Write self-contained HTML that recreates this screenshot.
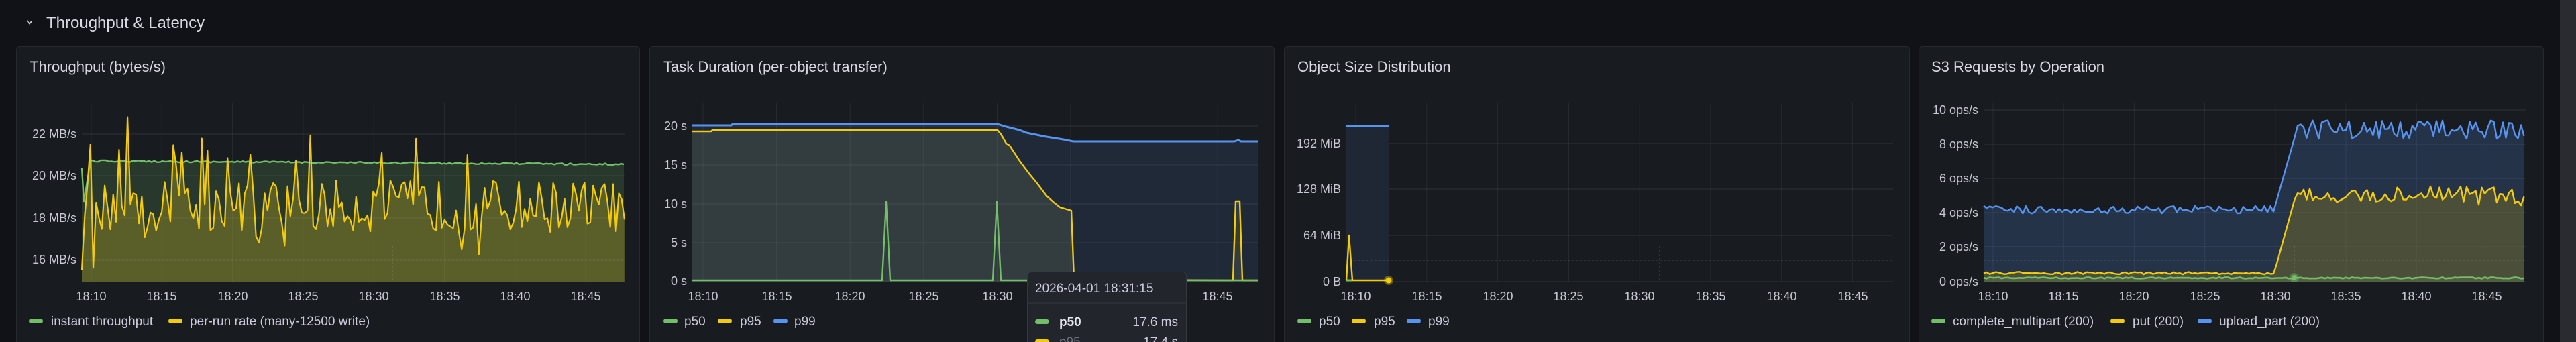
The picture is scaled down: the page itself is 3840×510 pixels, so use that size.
<!DOCTYPE html>
<html><head><meta charset="utf-8">
<style>
html,body{margin:0;padding:0;background:#111217;width:3840px;height:510px;overflow:hidden}
svg{display:block}
text{font-family:"Liberation Sans",sans-serif;fill:#ccccdc}
.ax{font-size:18px;fill:#c7c8d4}
.lg{font-size:19px;fill:#ccccdc}
.tt{font-size:22px;font-weight:500;fill:#d8d9e3}
</style></head><body>
<svg id="s" width="3840" height="510" viewBox="0 0 3840 510" xmlns="http://www.w3.org/2000/svg">
<rect width="3840" height="510" fill="#111217"/>
<rect x="3816" y="0" width="24" height="510" fill="#2a2b30"/>
<path d="M40 31 L44 35.5 L48 31" stroke="#ccccdc" stroke-width="1.8" fill="none"/>
<text x="69" y="42" style="font-size:24px;font-weight:500;fill:#d8d9e3">Throughput &amp; Latency</text>

<rect x="24.5" y="69.5" width="929" height="445" rx="5" fill="#181b1f" stroke="#26292f"/>
<rect x="968.5" y="69.5" width="931" height="445" rx="5" fill="#181b1f" stroke="#26292f"/>
<rect x="1914.5" y="69.5" width="932" height="445" rx="5" fill="#181b1f" stroke="#26292f"/>
<rect x="2860.5" y="69.5" width="931" height="445" rx="5" fill="#181b1f" stroke="#26292f"/>

<text class="tt" x="44" y="107">Throughput (bytes/s)</text>
<text class="tt" x="989" y="107">Task Duration (per-object transfer)</text>
<text class="tt" x="1934" y="107">Object Size Distribution</text>
<text class="tt" x="2879" y="107">S3 Requests by Operation</text>

<g id="grid"></g>
<g id="data"></g>

<g class="ax" text-anchor="end">
<text class="ax" x="114" y="206">22 MB/s</text><text class="ax" x="114" y="268">20 MB/s</text><text class="ax" x="114" y="331">18 MB/s</text><text class="ax" x="114" y="393">16 MB/s</text>
<text class="ax" x="1024" y="194">20 s</text><text class="ax" x="1024" y="252">15 s</text><text class="ax" x="1024" y="310">10 s</text><text class="ax" x="1024" y="368">5 s</text><text class="ax" x="1024" y="425">0 s</text>
<text class="ax" x="1999" y="220">192 MiB</text><text class="ax" x="1999" y="288">128 MiB</text><text class="ax" x="1999" y="357">64 MiB</text><text class="ax" x="1999" y="426">0 B</text>
<text class="ax" x="2949" y="170">10 ops/s</text><text class="ax" x="2949" y="221">8 ops/s</text><text class="ax" x="2949" y="272">6 ops/s</text><text class="ax" x="2949" y="323">4 ops/s</text><text class="ax" x="2949" y="374">2 ops/s</text><text class="ax" x="2949" y="426">0 ops/s</text>
</g>
<g text-anchor="middle">
<text class="ax" x="136" y="448">18:10</text><text class="ax" x="241" y="448">18:15</text><text class="ax" x="347" y="448">18:20</text><text class="ax" x="452" y="448">18:25</text><text class="ax" x="557" y="448">18:30</text><text class="ax" x="663" y="448">18:35</text><text class="ax" x="768" y="448">18:40</text><text class="ax" x="873" y="448">18:45</text>
<text class="ax" x="1048" y="448">18:10</text><text class="ax" x="1158" y="448">18:15</text><text class="ax" x="1267" y="448">18:20</text><text class="ax" x="1377" y="448">18:25</text><text class="ax" x="1487" y="448">18:30</text><text class="ax" x="1596" y="448">18:35</text><text class="ax" x="1706" y="448">18:40</text><text class="ax" x="1815" y="448">18:45</text>
<text class="ax" x="2021" y="448">18:10</text><text class="ax" x="2127" y="448">18:15</text><text class="ax" x="2233" y="448">18:20</text><text class="ax" x="2338" y="448">18:25</text><text class="ax" x="2444" y="448">18:30</text><text class="ax" x="2550" y="448">18:35</text><text class="ax" x="2656" y="448">18:40</text><text class="ax" x="2762" y="448">18:45</text>
<text class="ax" x="2971" y="448">18:10</text><text class="ax" x="3076" y="448">18:15</text><text class="ax" x="3181" y="448">18:20</text><text class="ax" x="3287" y="448">18:25</text><text class="ax" x="3392" y="448">18:30</text><text class="ax" x="3497" y="448">18:35</text><text class="ax" x="3602" y="448">18:40</text><text class="ax" x="3707" y="448">18:45</text>
</g>

<g>
<rect x="43" y="475" width="21" height="7" rx="3.5" fill="#73bf69"/><text class="lg" x="76" y="485">instant throughput</text>
<rect x="251" y="475" width="21" height="7" rx="3.5" fill="#f2cc0c"/><text class="lg" x="283" y="485">per-run rate (many-12500 write)</text>
<rect x="989" y="475" width="21" height="7" rx="3.5" fill="#73bf69"/><text class="lg" x="1020" y="485">p50</text>
<rect x="1070" y="475" width="21" height="7" rx="3.5" fill="#f2cc0c"/><text class="lg" x="1103" y="485">p95</text>
<rect x="1153" y="475" width="21" height="7" rx="3.5" fill="#5794f2"/><text class="lg" x="1184" y="485">p99</text>
<rect x="1934" y="475" width="21" height="7" rx="3.5" fill="#73bf69"/><text class="lg" x="1966" y="485">p50</text>
<rect x="2015" y="475" width="21" height="7" rx="3.5" fill="#f2cc0c"/><text class="lg" x="2048" y="485">p95</text>
<rect x="2097" y="475" width="21" height="7" rx="3.5" fill="#5794f2"/><text class="lg" x="2129" y="485">p99</text>
<rect x="2879" y="475" width="21" height="7" rx="3.5" fill="#73bf69"/><text class="lg" x="2911" y="485">complete_multipart (200)</text>
<rect x="3146" y="475" width="21" height="7" rx="3.5" fill="#f2cc0c"/><text class="lg" x="3179" y="485">put (200)</text>
<rect x="3276" y="475" width="21" height="7" rx="3.5" fill="#5794f2"/><text class="lg" x="3308" y="485">upload_part (200)</text>
</g>

<g>
<rect x="1531.5" y="405.5" width="237" height="110" rx="6" fill="#22252b" stroke="#34373e"/>
<line x1="1531" y1="452" x2="1768" y2="452" stroke="#34373e"/>
<text x="1543" y="436" style="font-size:19px;fill:#ccccdc">2026-04-01 18:31:15</text>
<rect x="1543" y="476" width="21" height="7" rx="3.5" fill="#73bf69"/>
<text x="1579" y="486" style="font-size:19px;font-weight:bold;fill:#e6e7ef">p50</text>
<text x="1756" y="486" text-anchor="end" style="font-size:19px;fill:#ccccdc">17.6 ms</text>
<rect x="1543" y="506" width="21" height="7" rx="3.5" fill="#f2cc0c"/>
<text x="1579" y="516" style="font-size:19px;fill:#6e7079">p95</text>
<text x="1756" y="516" text-anchor="end" style="font-size:19px;fill:#ccccdc">17.4 s</text>
</g>
</svg>
<script>
(function(){
var NS="http://www.w3.org/2000/svg";
var grid=document.getElementById("grid"),data=document.getElementById("data");
function el(p,tag,a){var e=document.createElementNS(NS,tag);for(var k in a)e.setAttribute(k,a[k]);p.appendChild(e);return e;}
var seed=12345;function r(){seed=(seed*16807)%2147483647;return (seed-1)/2147483646;}
function gridP(x0,x1,xt,yt,bot){
 xt.forEach(function(x){el(grid,"line",{x1:x,x2:x,y1:154,y2:bot,stroke:"rgba(204,204,220,0.09)","stroke-width":1});});
 yt.forEach(function(y){el(grid,"line",{x1:x0,x2:x1,y1:y,y2:y,stroke:"rgba(204,204,220,0.12)","stroke-width":1});});
}
function ticks(a,d){var o=[];for(var i=0;i<8;i++)o.push(a+d*i);return o;}
gridP(122,931,ticks(136,105.3),[200,262,325,387],421);
gridP(1032,1875,ticks(1048,109.6),[188,246,304,362,419],421);
gridP(2007,2822,ticks(2021,105.8),[214,282,351,420],421);
gridP(2957,3766,ticks(2971,105.2),[164,215,266,317,368,420],421);
function L(pts){return "M"+pts.map(function(p){return p[0].toFixed(1)+" "+p[1].toFixed(1);}).join(" L");}
function F(pts,b){return L(pts)+" L"+pts[pts.length-1][0]+" "+b+" L"+pts[0][0]+" "+b+" Z";}
function draw(pts,col,fill,b,w){if(fill)el(data,"path",{d:F(pts,b),fill:fill});el(data,"path",{d:L(pts),stroke:col,"stroke-width":w||2.2,fill:"none","stroke-linejoin":"round"});}
// Panel 1
var g1=[[122,250],[125,300],[135,240]];for(var x=138;x<=931;x+=4){g1.push([x,240+(x-138)/793*5+(r()-0.5)*2.5]);}
var y1=[];var n=190;for(var i=0;i<=n;i++){var x=122+809*i/n,v;var q=r();
 if(q<0.09)v=20.5+r()*1.5;else if(q<0.15)v=16+r()*1.2;else v=17.3+r()*2.5;
 if(i==0)v=15.5;if(i==3)v=21.5;if(i==4)v=15.6;if(i==16)v=22.8;y1.push([x,262-(v-20)*31.2]);}
draw(g1,"#73bf69","rgba(115,191,105,0.18)",421,2.4);
draw(y1,"#f2cc0c","rgba(160,150,40,0.42)",421,2.2);
el(data,"line",{x1:585,x2:585,y1:367,y2:421,stroke:"rgba(204,204,220,0.25)","stroke-dasharray":"3 3"});
el(data,"line",{x1:122,x2:931,y1:388,y2:388,stroke:"rgba(204,204,220,0.25)","stroke-dasharray":"3 3"});
// Panel 2
var b2=[[1032,187],[1090,187],[1092,185],[1487,185],[1500,189],[1520,194],[1530,198],[1560,204],[1585,208],[1600,211],[1840,211],[1846,209],[1850,211],[1875,211]];
var yy2=[[1032,196],[1060,196],[1062,194],[1487,194],[1492,200],[1500,214],[1505,217],[1520,240],[1535,260],[1545,272],[1560,292],[1570,301],[1580,309],[1597,314],[1601,417],[1838,418],[1842,300],[1848,300],[1852,418],[1875,418]];
var gg2=[[1032,418],[1315,418],[1321,301],[1327,418],[1480,418],[1486,301],[1492,418],[1875,418]];
draw(b2,"#5794f2","rgba(87,148,242,0.12)",421,3);
draw(yy2,"#f2cc0c","rgba(120,130,90,0.22)",421,2.4);
draw(gg2,"#73bf69",null,421,2.4);
// Panel 3
el(data,"rect",{x:2007,y:188,width:63,height:233,fill:"#1f2734"});
el(data,"line",{x1:2007,x2:2070,y1:188,y2:188,stroke:"#5794f2","stroke-width":3});
el(data,"line",{x1:2474,x2:2474,y1:367,y2:421,stroke:"rgba(204,204,220,0.25)","stroke-dasharray":"3 3"});
el(data,"line",{x1:2007,x2:2822,y1:388,y2:388,stroke:"rgba(204,204,220,0.25)","stroke-dasharray":"3 3"});
draw([[2007,418],[2015,418]],"#73bf69",null,421,3);
draw([[2007,418],[2011,351],[2016,418],[2070,418]],"#f2cc0c",null,421,2.4);
el(data,"circle",{cx:2070,cy:418,r:7,fill:"rgba(242,204,12,0.35)"});el(data,"circle",{cx:2070,cy:418,r:4.5,fill:"#f2cc0c"});
// Panel 4
var b4=[],p4=[],c4=[];
for(var x=2957;x<=3766;x+=4.5){var bv,pv,cv=0.22+(r()-0.5)*0.08;
 if(x<3390){bv=4.2+(r()-0.5)*0.45;pv=0.5+(r()-0.5)*0.15;}
 else if(x<3422){var t=(x-3390)/32;bv=4.2+t*4.4;pv=0.5+t*4.5;}
 else{bv=8.85+(r()-0.5)*1.1;pv=5.0+(r()-0.5)*1.1;}
 b4.push([x,420-bv*25.6]);p4.push([x,420-pv*25.6]);c4.push([x,420-cv*25.6]);}
draw(b4,"#5794f2","rgba(87,148,242,0.2)",421,2.4);
draw(p4,"#f2cc0c","rgba(150,130,30,0.35)",421,2.4);
draw(c4,"#73bf69","rgba(115,191,105,0.15)",421,2.6);
el(data,"line",{x1:3420,x2:3420,y1:367,y2:421,stroke:"rgba(204,204,220,0.25)","stroke-dasharray":"3 3"});
el(data,"line",{x1:2957,x2:3766,y1:388,y2:388,stroke:"rgba(204,204,220,0.25)","stroke-dasharray":"3 3"});
el(data,"circle",{cx:3420,cy:414,r:7,fill:"rgba(115,191,105,0.4)"});el(data,"circle",{cx:3420,cy:414,r:4,fill:"#73bf69"});
})();
</script>
</body></html>
